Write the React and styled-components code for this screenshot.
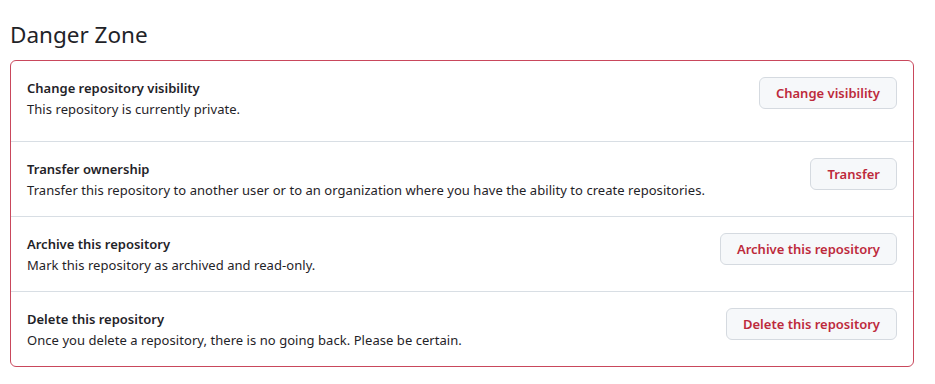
import React from 'react'
import styled, { createGlobalStyle } from 'styled-components'

const GlobalStyle = createGlobalStyle`
  body {
    margin: 0;
    background: #ffffff;
    font-family: "Noto Sans", "Open Sans", sans-serif;
    color: #1f2328;
  }
`

const Page = styled.div`
  width: 935px;
  height: 384px;
  padding: 19px 21px 0 10px;
  box-sizing: border-box;
`

const Heading = styled.h2`
  margin: 0 0 9px;
  font-size: 22.5px;
  font-weight: 400;
  line-height: 32px;
  color: #1f2328;
`

const Box = styled.div`
  border: 1px solid #c9485c;
  border-radius: 6px;
  overflow: hidden;
`

const Row = styled.div`
  display: flex;
  justify-content: space-between;
  align-items: flex-start;
  padding: ${(props) => (props.first ? '16px 16px 22px' : '16px')};
  border-top: ${(props) => (props.first ? 'none' : '1px solid #d8dee4')};
`

const Text = styled.div`
  display: flex;
  flex-direction: column;
`

const Title = styled.strong`
  font-size: 13px;
  font-weight: 600;
  line-height: 22px;
`

const Desc = styled.p`
  margin: 0;
  font-size: 13px;
  line-height: 20px;
  letter-spacing: 0.05px;
`

const DangerButton = styled.button`
  flex-shrink: 0;
  height: 32px;
  padding: 0 16px;
  font-family: inherit;
  font-size: 13px;
  font-weight: 600;
  color: #bd2a3c;
  background: #f6f8fa;
  border: 1px solid #d5dae0;
  border-radius: 6px;
`

const items = [
  {
    title: 'Change repository visibility',
    desc: 'This repository is currently private.',
    action: 'Change visibility'
  },
  {
    title: 'Transfer ownership',
    desc: 'Transfer this repository to another user or to an organization where you have the ability to create repositories.',
    action: 'Transfer'
  },
  {
    title: 'Archive this repository',
    desc: 'Mark this repository as archived and read-only.',
    action: 'Archive this repository'
  },
  {
    title: 'Delete this repository',
    desc: 'Once you delete a repository, there is no going back. Please be certain.',
    action: 'Delete this repository'
  }
]

export default function App() {
  return (
    <Page>
      <GlobalStyle />
      <Heading>Danger Zone</Heading>
      <Box>
        {items.map((item, i) => (
          <Row key={item.title} first={i === 0}>
            <Text>
              <Title>{item.title}</Title>
              <Desc>{item.desc}</Desc>
            </Text>
            <DangerButton>{item.action}</DangerButton>
          </Row>
        ))}
      </Box>
    </Page>
  )
}
